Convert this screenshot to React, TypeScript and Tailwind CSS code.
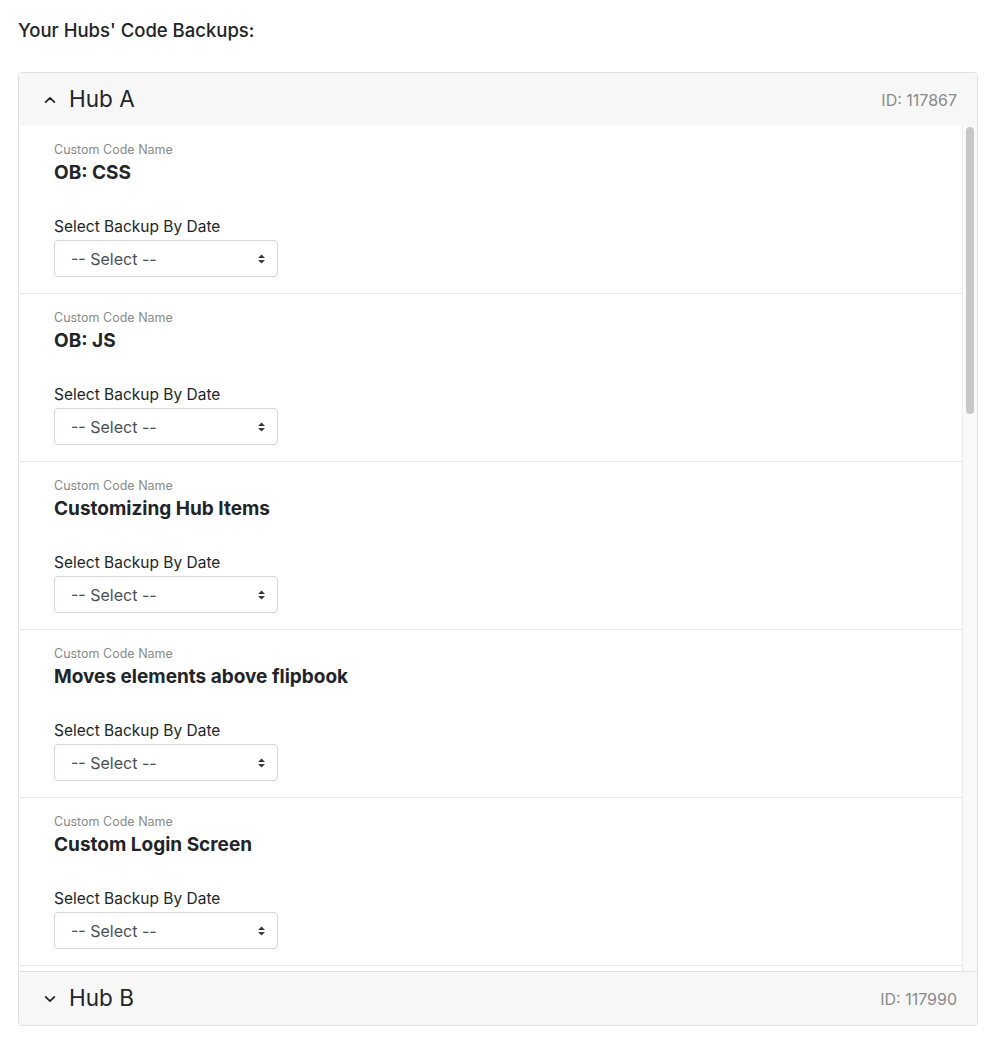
import React from "react";

const items = [
  "OB: CSS",
  "OB: JS",
  "Customizing Hub Items",
  "Moves elements above flipbook",
  "Custom Login Screen",
];

function Chevron({ up }: { up?: boolean }) {
  return (
    <svg width="14" height="14" viewBox="0 0 16 16" className="shrink-0">
      <path
        d={up ? "M3 10.5 8 5.5l5 5" : "M3 5.5l5 5 5-5"}
        fill="none"
        stroke="#212529"
        strokeWidth="2"
        strokeLinecap="round"
        strokeLinejoin="round"
      />
    </svg>
  );
}

function HubHeader({ name, id, open }: { name: string; id: string; open?: boolean }) {
  return (
    <div className="flex h-[53px] items-center justify-between bg-[#f7f7f7] pl-[24px] pr-[20px]">
      <div className="flex items-center gap-[12px]">
        <Chevron up={open} />
        <span className="text-[22.5px] leading-none text-[#212529]">{name}</span>
      </div>
      <span className="text-[16px] text-[#8a8a8a]">ID: {id}</span>
    </div>
  );
}

function BackupItem({ name }: { name: string }) {
  return (
    <div className="h-[168px] shrink-0 border-b border-[#e5e5e5] pl-[35px] pt-[16px]">
      <div className="text-[12.5px] leading-[16px] text-[#8a8a8a]">Custom Code Name</div>
      <div className="mt-[3px] text-[19px] font-bold leading-[24px] text-[#212529]">{name}</div>
      <div className="mt-[31px] text-[15.5px] leading-[22px] text-[#212529]">Select Backup By Date</div>
      <div className="mt-[2px] flex h-[37px] w-[224px] items-center justify-between rounded-[4px] border border-[#d3d6da] bg-white pl-[16px] pr-[11px]">
        <span className="text-[16px] text-[#495057]">-- Select --</span>
        <svg width="9" height="12" viewBox="0 0 9 12">
          <path d="M4.5 1.5 8 5H1z" fill="#343a40" />
          <path d="M4.5 10.5 8 7H1z" fill="#343a40" />
        </svg>
      </div>
    </div>
  );
}

export default function App() {
  return (
    <div
      className="min-h-screen bg-white px-[18px] pt-[17px]"
      style={{ fontFamily: "Inter, 'Noto Sans', sans-serif" }}
    >
      <h2 className="text-[18.5px] font-medium leading-[26px] text-[#212529]">Your Hubs' Code Backups:</h2>
      <div className="mt-[29px] w-[960px] overflow-hidden rounded-[4px] border border-[#e0e0e0]">
        <HubHeader name="Hub A" id="117867" open />
        <div className="flex h-[845px]">
          <div className="flex flex-1 flex-col overflow-hidden bg-white">
            {items.map((n) => (
              <BackupItem key={n} name={n} />
            ))}
          </div>
          <div className="flex w-[15px] shrink-0 justify-center border-l border-[#ececec] bg-[#f9f9f9] pt-[1px]">
            <div className="h-[287px] w-[8px] rounded-full bg-[#c6c8c6]" />
          </div>
        </div>
        <div className="border-t border-[#e0e0e0]">
          <HubHeader name="Hub B" id="117990" />
        </div>
      </div>
    </div>
  );
}
